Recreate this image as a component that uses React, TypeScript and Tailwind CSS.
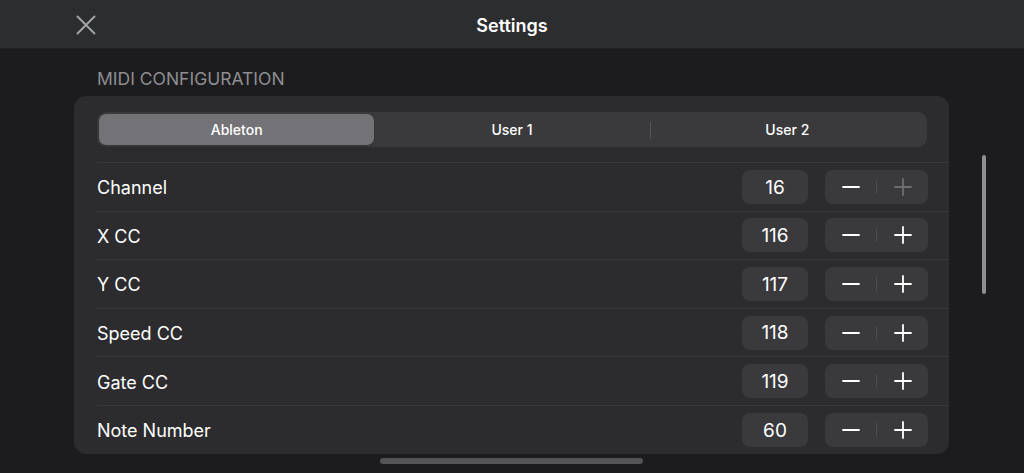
const rows = [
  { label: "Channel", value: 16, plusDisabled: true },
  { label: "X CC", value: 116 },
  { label: "Y CC", value: 117 },
  { label: "Speed CC", value: 118 },
  { label: "Gate CC", value: 119 },
  { label: "Note Number", value: 60 },
]

const tabs = ["Ableton", "User 1", "User 2"]

function Stepper({ plusDisabled }: { plusDisabled?: boolean }) {
  return (
    <div className="flex h-[34px] w-[103px] items-center rounded-lg bg-[#3a3a3c]">
      <button className="flex flex-1 items-center justify-center">
        <svg width="18" height="18" viewBox="0 0 18 18">
          <path d="M1 9h16" stroke="#ffffff" strokeWidth="1.8" strokeLinecap="round" />
        </svg>
      </button>
      <div className="h-[14px] w-px bg-[#4e4e52]" />
      <button className="flex flex-1 items-center justify-center">
        <svg width="18" height="18" viewBox="0 0 18 18">
          <path
            d="M1 9h16M9 1v16"
            stroke={plusDisabled ? "#6e6e72" : "#ffffff"}
            strokeWidth="1.8"
            strokeLinecap="round"
          />
        </svg>
      </button>
    </div>
  )
}

export default function App() {
  const active = 0

  return (
    <div
      className="relative h-[473px] w-[1024px] overflow-hidden bg-[#1c1c1e] text-white"
      style={{ fontFamily: "Inter, 'Noto Sans', sans-serif" }}
    >
      {/* Header */}
      <header className="relative flex h-[49px] items-center justify-center border-b border-[#232325] bg-[#2c2d2e] pt-[3px]">
        <button className="absolute left-[76px] top-[15px]">
          <svg width="20" height="20" viewBox="0 0 20 20">
            <path d="M1.5 1.5l17 17M18.5 1.5l-17 17" stroke="#a3a3a6" strokeWidth="2" strokeLinecap="round" />
          </svg>
        </button>
        <h1 className="text-[18px] font-semibold">Settings</h1>
      </header>

      {/* Section */}
      <div className="pl-[97px] pt-[20px] text-[17.5px] leading-[20px] text-[#8e8e93]">MIDI CONFIGURATION</div>

      <div className="ml-[74px] mt-[7px] w-[875px] rounded-xl bg-[#2c2c2e] pt-[16px]">
        {/* Segmented control */}
        <div className="ml-[23px] mr-[22px] flex h-[35px] items-center rounded-[9px] bg-[#3a3a3c] p-[2px]">
          {tabs.map((t, i) => (
            <div key={t} className="relative flex h-full flex-1 items-center justify-center">
              {i > 0 && i - 1 !== active && i !== active && (
                <div className="absolute left-0 top-[8px] h-[17px] w-px bg-[#545458]" />
              )}
              <div
                className={`flex h-full w-full items-center justify-center rounded-[7px] text-[14px] font-medium ${
                  i === active ? "bg-[#737377] shadow" : ""
                }`}
              >
                {t}
              </div>
            </div>
          ))}
        </div>

        {/* Rows */}
        <div className="mt-[15px]">
          {rows.map((r) => (
            <div
              key={r.label}
              className="ml-[23px] flex h-[48.6px] items-center border-t border-[#38383a] pr-[21px]"
            >
              <span className="flex-1 pt-[2px] text-[18px]">{r.label}</span>
              <div className="flex h-[34px] w-[66px] items-center justify-center rounded-lg bg-[#3a3a3c] pt-[2px] text-[19px]">
                {r.value}
              </div>
              <div className="ml-[17px]">
                <Stepper plusDisabled={r.plusDisabled} />
              </div>
            </div>
          ))}
        </div>
      </div>

      {/* Scroll indicators */}
      <div className="absolute left-[982px] top-[155px] h-[139px] w-[4px] rounded-full bg-[#8e8e93]" />
      <div className="absolute left-[380px] top-[458px] h-[6px] w-[263px] rounded-full bg-[#545456]" />
    </div>
  )
}
